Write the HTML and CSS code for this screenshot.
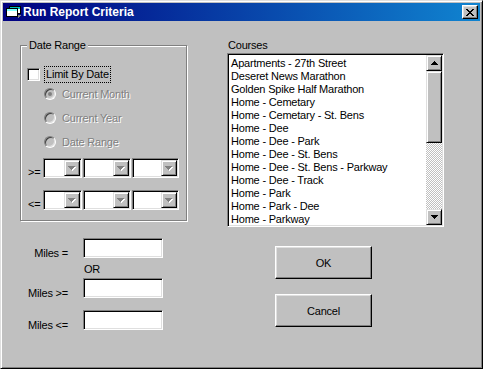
FILE: index.html
```html
<html>
<head>
<title>Run Report Criteria</title>
<meta charset="UTF-8">
<link rel="stylesheet" href="styles.css">
</head>
<body>
<div class="window">
	<div class="titlebar">
		<svg class="appicon" width="16" height="12" viewBox="0 0 16 12" shape-rendering="crispEdges">
			<rect x="3" y="0" width="12" height="8" fill="#000"/>
			<rect x="4" y="1" width="10" height="2" fill="#00c0c0"/>
			<rect x="4" y="3" width="10" height="4" fill="#fff"/>
			<rect x="0" y="2" width="12" height="9" fill="#000"/>
			<rect x="1" y="3" width="10" height="2" fill="#80ffff"/>
			<rect x="1" y="5" width="10" height="5" fill="#fff"/>
			<path d="M12 9h3v1h-1v1h-1v1h-1z" fill="#808080"/>
		</svg>
		<span class="title">Run Report Criteria</span>
		<div class="closebtn">
			<svg width="8" height="7" viewBox="0 0 8 7" shape-rendering="crispEdges"><path d="M0 0h2v1H0zM6 0h2v1H6zM1 1h2v1H1zM5 1h2v1H5zM2 2h4v1H2zM3 3h2v1H3zM2 4h4v1H2zM1 5h2v1H1zM5 5h2v1H5zM0 6h2v1H0zM6 6h2v1H6z" fill="#000"/></svg>
		</div>
	</div>
	<div class="client">
		<div class="leftcol">
			<div class="group">
				<span class="caption">Date Range</span>
				<div class="checkrow"><span class="checkbox"></span><span class="focus">Limit By Date</span></div>
				<div class="radiorow"><span class="radio checked"></span>Current Month</div>
				<div class="radiorow"><span class="radio"></span>Current Year</div>
				<div class="radiorow"><span class="radio"></span>Date Range</div>
				<div class="comborow">
					<span class="op">&gt;=</span>
					<div class="combo small"><span class="drop"><svg width="8" height="5" viewBox="0 0 8 5" shape-rendering="crispEdges"><path d="M1 1h7v1H7v1H6v1H5v1H4V3H3V2H2V2z" fill="#fff"/><path d="M0 0h7v1H6v1H5v1H4v1H3V3H2V2H1V1H0z" fill="#808080"/></svg></span></div>
					<div class="combo"><span class="drop"><svg width="8" height="5" viewBox="0 0 8 5" shape-rendering="crispEdges"><path d="M1 1h7v1H7v1H6v1H5v1H4V3H3V2H2V2z" fill="#fff"/><path d="M0 0h7v1H6v1H5v1H4v1H3V3H2V2H1V1H0z" fill="#808080"/></svg></span></div>
					<div class="combo last"><span class="drop"><svg width="8" height="5" viewBox="0 0 8 5" shape-rendering="crispEdges"><path d="M1 1h7v1H7v1H6v1H5v1H4V3H3V2H2V2z" fill="#fff"/><path d="M0 0h7v1H6v1H5v1H4v1H3V3H2V2H1V1H0z" fill="#808080"/></svg></span></div>
				</div>
				<div class="comborow second">
					<span class="op">&lt;=</span>
					<div class="combo small"><span class="drop"><svg width="8" height="5" viewBox="0 0 8 5" shape-rendering="crispEdges"><path d="M1 1h7v1H7v1H6v1H5v1H4V3H3V2H2V2z" fill="#fff"/><path d="M0 0h7v1H6v1H5v1H4v1H3V3H2V2H1V1H0z" fill="#808080"/></svg></span></div>
					<div class="combo"><span class="drop"><svg width="8" height="5" viewBox="0 0 8 5" shape-rendering="crispEdges"><path d="M1 1h7v1H7v1H6v1H5v1H4V3H3V2H2V2z" fill="#fff"/><path d="M0 0h7v1H6v1H5v1H4v1H3V3H2V2H1V1H0z" fill="#808080"/></svg></span></div>
					<div class="combo last"><span class="drop"><svg width="8" height="5" viewBox="0 0 8 5" shape-rendering="crispEdges"><path d="M1 1h7v1H7v1H6v1H5v1H4V3H3V2H2V2z" fill="#fff"/><path d="M0 0h7v1H6v1H5v1H4v1H3V3H2V2H1V1H0z" fill="#808080"/></svg></span></div>
				</div>
			</div>
			<div class="miles">
				<div class="milesrow"><label>Miles =</label><span class="textbox"></span></div>
				<div class="orrow">OR</div>
				<div class="milesrow"><label>Miles &gt;=</label><span class="textbox"></span></div>
				<div class="milesrow gap"><label>Miles &lt;=</label><span class="textbox"></span></div>
			</div>
		</div>
		<div class="rightcol">
			<div class="listlabel">Courses</div>
			<div class="listbox">
				<ul class="items">
					<li>Apartments - 27th Street</li>
					<li>Deseret News Marathon</li>
					<li>Golden Spike Half Marathon</li>
					<li>Home - Cemetary</li>
					<li>Home - Cemetary - St. Bens</li>
					<li>Home - Dee</li>
					<li>Home - Dee - Park</li>
					<li>Home - Dee - St. Bens</li>
					<li>Home - Dee - St. Bens - Parkway</li>
					<li>Home - Dee - Track</li>
					<li>Home - Park</li>
					<li>Home - Park - Dee</li>
					<li>Home - Parkway</li>
				</ul>
				<div class="scrollbar">
					<span class="sbbtn"><svg width="7" height="4" viewBox="0 0 7 4" shape-rendering="crispEdges"><path d="M3 0h1v1H3zM2 1h3v1H2zM1 2h5v1H1zM0 3h7v1H0z" fill="#000"/></svg></span>
					<span class="thumb"></span>
					<span class="track"></span>
					<span class="sbbtn"><svg width="7" height="4" viewBox="0 0 7 4" shape-rendering="crispEdges"><path d="M0 0h7v1H0zM1 1h5v1H1zM2 2h3v1H2zM3 3h1v1H3z" fill="#000"/></svg></span>
				</div>
			</div>
			<div class="buttons">
				<button class="btn">OK</button>
				<button class="btn">Cancel</button>
			</div>
		</div>
	</div>
</div>
</body>
</html>
```
FILE: styles.css
```css
*{
  margin:0;
  padding:0;
  box-sizing:border-box;
}

body{
  background:#c0c0c0;
  font-family:"Liberation Sans",Arial,sans-serif;
  font-size:11px;
  letter-spacing:-0.2px;
  color:#000;
}

/* window frame */
.window{
  width:483px;
  height:369px;
  padding:2px;
  border:1px solid;
  border-color:#dfdfdf #000 #000 #dfdfdf;
  box-shadow:inset 1px 1px #fff,inset -1px -1px #808080;
  background:#c0c0c0;
  display:flex;
  flex-direction:column;
}

.titlebar{
  height:18px;
  display:flex;
  align-items:center;
  padding-left:3px;
  background:linear-gradient(to right,#000080,#1084d0);
  color:#fff;
}
.appicon{margin-right:1px}
.title{
  flex:1;
  font-weight:bold;
  font-size:12px;
  letter-spacing:0;
  line-height:14px;
}
.closebtn{
  width:16px;
  height:14px;
  margin-right:2px;
  display:flex;
  align-items:center;
  justify-content:center;
  background:#c0c0c0;
  border:1px solid;
  border-color:#fff #000 #000 #fff;
  box-shadow:inset -1px -1px #808080,inset 1px 1px #dfdfdf;
}

.client{
  flex:1;
  display:flex;
  padding:18px 0 0 17px;
}

/* left column */
.leftcol{width:167px}

.group{
  position:relative;
  height:176px;
  margin-top:6px;
  border:1px solid #808080;
  box-shadow:inset 1px 1px #fff,1px 1px #fff;
  padding:20px 0 0 6px;
}
.caption{
  position:absolute;
  left:6px;
  top:-7px;
  padding:0 2px;
  line-height:13px;
  background:#c0c0c0;
}

.checkrow{
  height:16px;
  display:flex;
  align-items:center;
}
.checkbox{
  width:13px;
  height:13px;
  margin-right:4px;
  background:#fff;
  border:1px solid;
  border-color:#808080 #fff #fff #808080;
  box-shadow:inset 1px 1px #000,inset -1px -1px #dfdfdf;
}
.focus{
  border:1px dotted #000;
  padding:0 1px;
  line-height:15px;
}

.radiorow{
  height:24px;
  display:flex;
  align-items:center;
  padding-left:17px;
  color:#808080;
  text-shadow:1px 1px #fff;
}
.radio{
  width:12px;
  height:12px;
  margin-right:6px;
  border-radius:50%;
  background:#c0c0c0;
  border:1px solid;
  border-color:#808080 #fff #fff #808080;
  box-shadow:inset 1px 1px #404040,inset -1px -1px #dfdfdf;
  display:flex;
  align-items:center;
  justify-content:center;
}
.radio.checked::after{
  content:"";
  width:4px;
  height:4px;
  border-radius:50%;
  background:#808080;
}

.comborow{
  display:flex;
  align-items:flex-end;
  margin-top:4px;
}
.comborow.second{margin-top:12px}
.op{
  width:16px;
  padding-left:1px;
  line-height:13px;
  margin-bottom:-1px;
}
.combo{
  width:48px;
  height:20px;
  margin-right:1px;
  padding:1px;
  display:flex;
  justify-content:flex-end;
  background:#fff;
  border:1px solid;
  border-color:#808080 #fff #fff #808080;
  box-shadow:inset 1px 1px #000,inset -1px -1px #dfdfdf;
}
.combo.small{width:39px}
.combo.last{width:47px}
.drop{
  width:16px;
  height:16px;
  display:flex;
  align-items:center;
  justify-content:center;
  background:#c0c0c0;
  border:1px solid;
  border-color:#dfdfdf #000 #000 #dfdfdf;
  box-shadow:inset 1px 1px #fff,inset -1px -1px #808080;
}

.miles{margin-top:17px}
.milesrow{
  height:20px;
  display:flex;
  align-items:flex-end;
}
.milesrow.gap{margin-top:12px}
.milesrow label{
  width:48px;
  margin-right:15px;
  text-align:right;
  line-height:13px;
  margin-bottom:-2px;
}
.textbox{
  width:80px;
  height:20px;
  background:#fff;
  border:1px solid;
  border-color:#808080 #fff #fff #808080;
  box-shadow:inset 1px 1px #000,inset -1px -1px #dfdfdf;
}
.orrow{
  height:20px;
  padding:5px 0 0 64px;
  line-height:13px;
}

/* right column */
.rightcol{
  width:217px;
  margin-left:40px;
}
.listlabel{
  line-height:13px;
  padding-left:1px;
}
.listbox{
  height:174px;
  margin-top:1px;
  padding:1px;
  display:flex;
  background:#fff;
  border:1px solid;
  border-color:#808080 #fff #fff #808080;
  box-shadow:inset 1px 1px #000,inset -1px -1px #dfdfdf;
}
.items{
  flex:1;
  list-style:none;
  padding:2px 0 0 2px;
  line-height:13px;
  white-space:nowrap;
  overflow:hidden;
}

.scrollbar{
  width:16px;
  display:flex;
  flex-direction:column;
  background:repeating-conic-gradient(#fff 0 25%,#c0c0c0 0 50%) 0 0/2px 2px;
}
.sbbtn, .thumb{
  display:flex;
  align-items:center;
  justify-content:center;
  background:#c0c0c0;
  border:1px solid;
  border-color:#dfdfdf #000 #000 #dfdfdf;
  box-shadow:inset 1px 1px #fff,inset -1px -1px #808080;
}
.sbbtn{height:16px}
.thumb{height:72px}
.track{flex:1}

.buttons{
  display:flex;
  flex-direction:column;
  gap:15px;
  padding:19px 0 0 48px;
}
.btn{
  width:97px;
  height:33px;
  font:inherit;
  letter-spacing:inherit;
  color:#000;
  background:#c0c0c0;
  border:1px solid;
  border-color:#fff #000 #000 #fff;
  box-shadow:inset -1px -1px #808080,inset 1px 1px #dfdfdf;
}
```
